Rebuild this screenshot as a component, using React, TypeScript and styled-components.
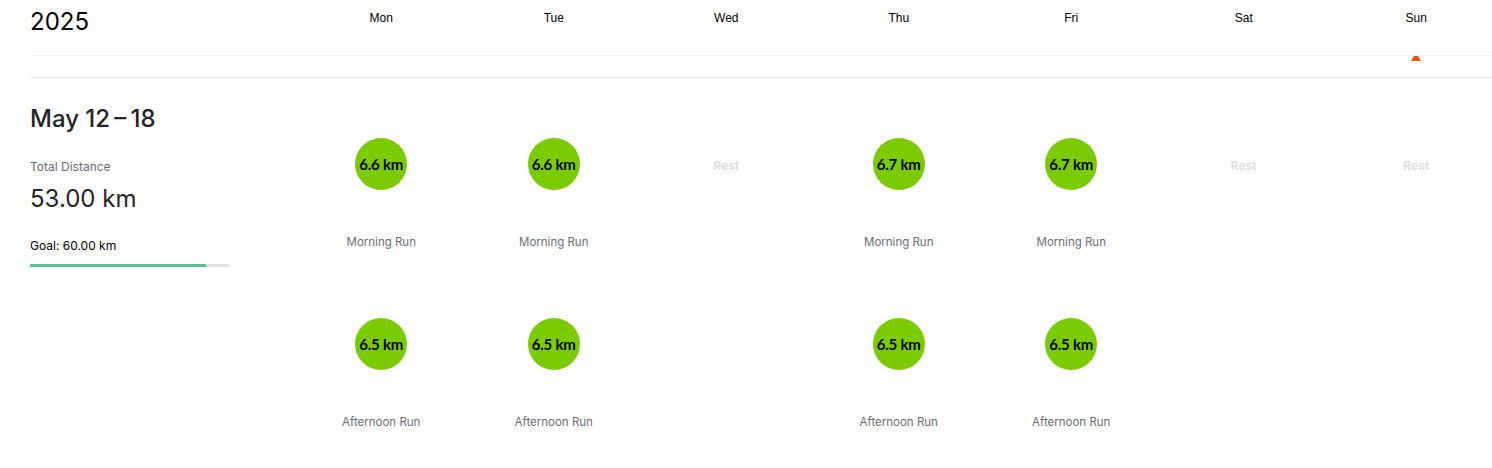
import React from "react"
import styled, { createGlobalStyle } from "styled-components"

const GlobalStyle = createGlobalStyle`
  html, body {
    margin: 0;
    padding: 0;
    overflow: hidden;
    background: #fff;
  }
  body {
    font-family: "Inter", "Liberation Sans", sans-serif;
    color: #242428;
  }
`

type Activity = { km: string; name: string }

const days: { label: string; today?: boolean; runs: Activity[] }[] = [
  { label: "Mon", runs: [{ km: "6.6 km", name: "Morning Run" }, { km: "6.5 km", name: "Afternoon Run" }] },
  { label: "Tue", runs: [{ km: "6.6 km", name: "Morning Run" }, { km: "6.5 km", name: "Afternoon Run" }] },
  { label: "Wed", runs: [] },
  { label: "Thu", runs: [{ km: "6.7 km", name: "Morning Run" }, { km: "6.5 km", name: "Afternoon Run" }] },
  { label: "Fri", runs: [{ km: "6.7 km", name: "Morning Run" }, { km: "6.5 km", name: "Afternoon Run" }] },
  { label: "Sat", runs: [] },
  { label: "Sun", today: true, runs: [] },
]

const total = 53
const goal = 60

const App = () => {
  return (
    <>
      <GlobalStyle />
      <Page>
        <Header>
          <Year>2025</Year>
          {days.map((d) => (
            <DayName key={d.label}>{d.label}</DayName>
          ))}
        </Header>
        <MarkerRow>
          <div />
          {days.map((d) => (
            <MarkerCell key={d.label}>{d.today && <TodayMark />}</MarkerCell>
          ))}
        </MarkerRow>
        <Week>
          <Summary>
            <Range>May 12{"\u2009"}–{"\u2009"}18</Range>
            <StatLabel>Total Distance</StatLabel>
            <StatValue>53.00 km</StatValue>
            <GoalLabel>Goal: 60.00 km</GoalLabel>
            <Track>
              <Fill style={{ width: `${(total / goal) * 100}%` }} />
            </Track>
          </Summary>
          {days.map((d) => (
            <DayColumn key={d.label}>
              {d.runs.length === 0 ? (
                <RestSlot>
                  <Rest>Rest</Rest>
                </RestSlot>
              ) : (
                d.runs.map((r, i) => (
                  <Run key={i}>
                    <Bubble>{r.km}</Bubble>
                    <RunName>{r.name}</RunName>
                  </Run>
                ))
              )}
            </DayColumn>
          ))}
        </Week>
      </Page>
    </>
  )
}

// the week grid is a little wider than the window, the page clips it
const cols = "265px repeat(7, 172.5px)"

const Page = styled.div`
  margin-left: 30px;
  overflow: hidden;
`

const Header = styled.div`
  display: grid;
  grid-template-columns: ${cols};
  height: 55px;
  border-bottom: 1px solid #f0f0f0;
  align-items: start;
`

const Year = styled.div`
  font-size: 24px;
  line-height: 30px;
  padding-top: 7px;
  color: #000;
`

const DayName = styled.div`
  font-family: "Liberation Sans", Arial, sans-serif;
  font-size: 12px;
  line-height: 16px;
  padding-top: 10px;
  text-align: center;
  color: #000;
`

const MarkerRow = styled.div`
  display: grid;
  grid-template-columns: ${cols};
  height: 21px;
  border-bottom: 1px solid #f0f0f0;
`

const MarkerCell = styled.div`
  display: flex;
  justify-content: center;
`

const TodayMark = styled.div`
  width: 4px;
  height: 0;
  border-left: 3px solid transparent;
  border-right: 3px solid transparent;
  border-bottom: 5px solid #fc5200;
`

const Week = styled.div`
  display: grid;
  grid-template-columns: ${cols};
  align-items: start;
`

const Summary = styled.div`
  padding-top: 26px;
  width: 199px;
`

const Range = styled.div`
  font-size: 24px;
  line-height: 30px;
  font-weight: 500;
  color: #242428;
`

const StatLabel = styled.div`
  margin-top: 25px;
  font-size: 12px;
  line-height: 16px;
  color: #6d6d78;
`

const StatValue = styled.div`
  margin-top: 9px;
  font-size: 24px;
  line-height: 30px;
  color: #242428;
`

const GoalLabel = styled.div`
  margin-top: 24px;
  font-size: 12px;
  line-height: 16px;
  color: #000;
`

const Track = styled.div`
  margin-top: 10px;
  height: 3px;
  background: #dfdfdf;
`

const Fill = styled.div`
  height: 100%;
  background: #4fc48e;
`

const DayColumn = styled.div`
  display: flex;
  flex-direction: column;
  align-items: center;
`

const Run = styled.div`
  height: 180px;
  box-sizing: border-box;
  padding-top: 60px;
  display: flex;
  flex-direction: column;
  align-items: center;
`

const Bubble = styled.div`
  width: 52px;
  height: 52px;
  border-radius: 50%;
  background: #7acc00;
  display: flex;
  align-items: center;
  justify-content: center;
  font-family: "Lato", sans-serif;
  font-weight: 700;
  font-size: 15px;
  letter-spacing: -0.2px;
  color: #000;
  white-space: nowrap;
`

const RunName = styled.div`
  margin-top: 45px;
  font-size: 11.5px;
  line-height: 14px;
  color: #6d6d78;
`

const RestSlot = styled.div`
  padding-top: 81px;
`

const Rest = styled.div`
  font-size: 12px;
  font-weight: 700;
  line-height: 14px;
  color: #dfdfe0;
`

export default App
